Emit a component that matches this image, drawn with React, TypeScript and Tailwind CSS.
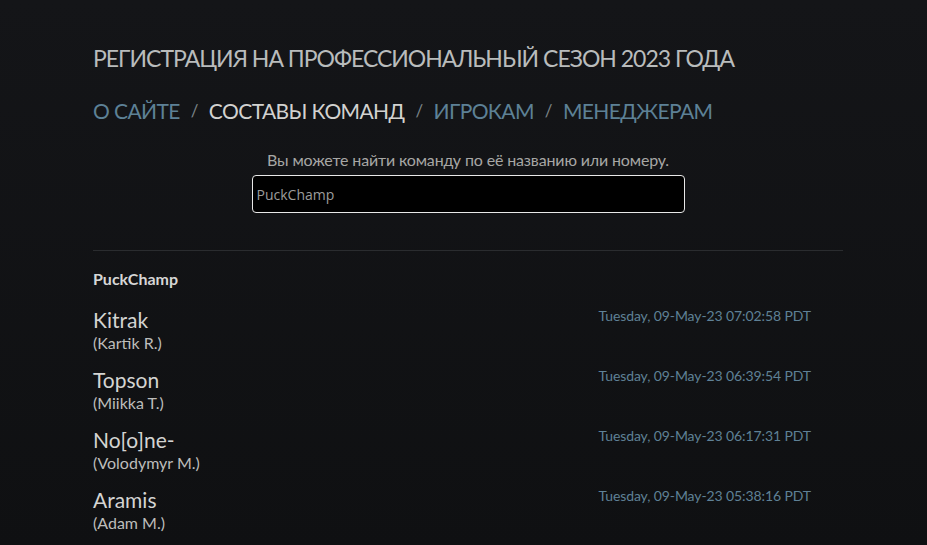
import { useState } from "react";

const players = [
  { nick: "Kitrak", name: "(Kartik R.)", date: "Tuesday, 09-May-23 07:02:58 PDT" },
  { nick: "Topson", name: "(Miikka T.)", date: "Tuesday, 09-May-23 06:39:54 PDT" },
  { nick: "No[o]ne-", name: "(Volodymyr M.)", date: "Tuesday, 09-May-23 06:17:31 PDT" },
  { nick: "Aramis", name: "(Adam M.)", date: "Tuesday, 09-May-23 05:38:16 PDT" },
];

export default function App() {
  const [query, setQuery] = useState("PuckChamp");

  return (
    <main
      className="min-h-screen bg-gradient-to-b from-[#141518] to-[#0f1012] text-[#c4c6c6] overflow-hidden"
      style={{ fontFamily: "Lato, 'Noto Sans', sans-serif" }}
    >
      <div className="pl-[93px] pt-[42px] w-[843px]">
        <h1 className="text-[23px] leading-[32px] text-[#b9bcbc] tracking-[-1px] uppercase">
          Регистрация на профессиональный сезон 2023 года
        </h1>

        <nav className="mt-[21px] flex items-center text-[21px] leading-[32px] tracking-[-0.6px]">
          <a className="text-[#5d8196]">О САЙТЕ</a>
          <span className="mx-[11px] text-[#7b8488] text-[17px]">/</span>
          <a className="text-[#d2d2d0]">СОСТАВЫ КОМАНД</a>
          <span className="mx-[11px] text-[#7b8488] text-[17px]">/</span>
          <a className="text-[#5d8196]">ИГРОКАМ</a>
          <span className="mx-[11px] text-[#7b8488] text-[17px]">/</span>
          <a className="text-[#5d8196]">МЕНЕДЖЕРАМ</a>
        </nav>

        <div className="mt-[22px] flex flex-col items-center">
          <p className="text-[16px] leading-[22px] text-[#a7a7a5] tracking-[-0.15px]">
            Вы можете найти команду по её названию или номеру.
          </p>
          <input
            value={query}
            onChange={(e) => setQuery(e.target.value)}
            className="mt-[4px] w-[433px] h-[38px] bg-black border border-[#e8e8e8] rounded-[4px] px-[4px] text-[14px] text-[#9c9c9c] outline-none"
            style={{ fontFamily: "'Open Sans', sans-serif" }}
          />
        </div>

        <hr className="mt-[37px] border-0 border-t border-[#2a2c2f]" />

        <h2 className="mt-[18px] text-[16px] leading-[20px] font-bold text-[#d6d6d6]">
          PuckChamp
        </h2>

        <ul className="mt-[18px] flex flex-col">
          {players.map((p) => (
            <li key={p.nick} className="flex justify-between pr-[32px] h-[60px]">
              <div className="flex flex-col">
                <span className="text-[21px] leading-[26px] text-[#d4d4d2]">{p.nick}</span>
                <span className="text-[16px] leading-[20px] text-[#bdbdbb]">{p.name}</span>
              </div>
              <span className="pt-[2px] text-[14px] leading-[14px] tracking-[-0.1px] text-[#5f8196]">
                {p.date}
              </span>
            </li>
          ))}
        </ul>
      </div>
    </main>
  );
}
